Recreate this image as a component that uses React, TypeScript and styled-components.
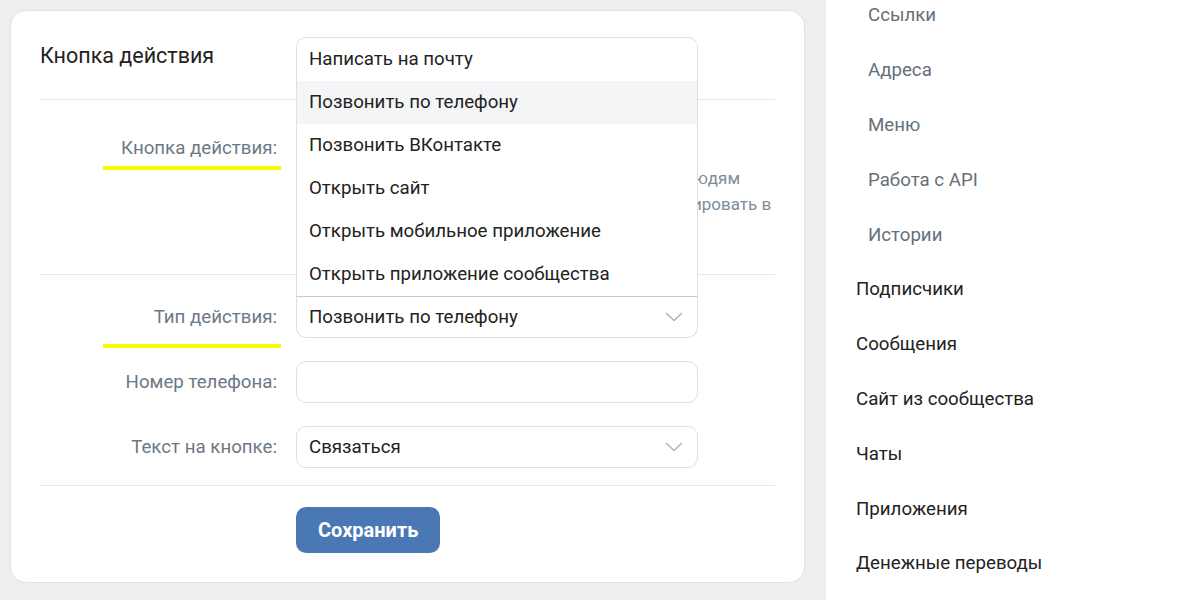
import React from 'react';
import styled, { createGlobalStyle } from 'styled-components';

const GlobalStyle = createGlobalStyle`
  html, body {
    margin: 0;
    padding: 0;
    background: #edeef0;
    font-family: Roboto, "Liberation Sans", Arial, sans-serif;
    -webkit-font-smoothing: antialiased;
  }
  * { box-sizing: border-box; }
`;

const Page = styled.div`
  display: flex;
  height: 600px;
  overflow: hidden;
  background: #edeef0;
`;

const Main = styled.main`
  padding: 10px 21px 0 10px;
`;

const Card = styled.section`
  width: 795px;
  height: 573px;
  background: #fff;
  border: 1px solid #dfe2e7;
  border-radius: 16px;
  padding: 0 29px;
`;

const CardHeader = styled.h2`
  margin: 0;
  height: 89px;
  display: flex;
  align-items: center;
  font-size: 21.5px;
  font-weight: 400;
  color: #222;
  border-bottom: 1px solid #e7e8ec;
`;

const Section = styled.div<{ top: number; bottom: number }>`
  display: flex;
  flex-direction: column;
  gap: 23px;
  padding-top: ${(p) => p.top}px;
  padding-bottom: ${(p) => p.bottom}px;
  border-bottom: 1px solid #e7e8ec;
`;

const Row = styled.div`
  display: grid;
  grid-template-columns: 237px 402px;
  column-gap: 19px;
  align-items: start;
`;

const Label = styled.label<{ mark?: number }>`
  position: relative;
  height: 42px;
  display: flex;
  align-items: center;
  justify-content: flex-end;
  font-size: 18.7px;
  color: #6d7885;

  ${(p) =>
    p.mark !== undefined &&
    `
    &::after {
      content: '';
      position: absolute;
      left: 63px;
      right: -4px;
      top: ${p.mark}px;
      height: 4px;
      background: #fbfb00;
    }
  `}
`;

const Control = styled.div`
  position: relative;
  grid-column: 2;
`;

const Field = styled.div<{ open?: boolean }>`
  height: 42px;
  display: flex;
  align-items: center;
  justify-content: space-between;
  padding: 0 14px 0 12px;
  font-size: 18.7px;
  color: #222;
  background: #fff;
  border: 1px solid #dce1e6;
  border-top-color: ${(p) => (p.open ? '#c5ccd4' : '#dce1e6')};
  border-radius: ${(p) => (p.open ? '0 0 10px 10px' : '10px')};
`;

const Chevron = () => (
  <svg width="18" height="10" viewBox="0 0 18 10">
    <polyline points="1.5,1.5 9,8.5 16.5,1.5" fill="none" stroke="#aeb7c2" strokeWidth="1.7" strokeLinecap="round" strokeLinejoin="round" />
  </svg>
);

const Menu = styled.ul`
  position: absolute;
  left: 0;
  right: 0;
  bottom: 100%;
  margin: 0;
  padding: 0;
  list-style: none;
  background: #fff;
  border: 1px solid #dce1e6;
  border-bottom: none;
  border-radius: 10px 10px 0 0;
  overflow: hidden;
  z-index: 5;
`;

const MenuItem = styled.li<{ active?: boolean }>`
  height: 43px;
  display: flex;
  align-items: center;
  padding: 0 12px;
  font-size: 18.7px;
  color: #222;
  background: ${(p) => (p.active ? '#f4f5f7' : '#fff')};
`;

const Description = styled.p`
  grid-column: 2;
  margin: -3px 0 0;
  width: 479px;
  font-size: 17px;
  line-height: 25.5px;
  color: #818c99;
  white-space: nowrap;
`;

const Footer = styled.div`
  padding: 21px 0 0 256px;
`;

const SaveButton = styled.button`
  height: 46px;
  padding: 0 22px;
  border: none;
  border-radius: 10px;
  background: #4a78b5;
  color: #fff;
  font-family: inherit;
  font-size: 20px;
  font-weight: 700;
`;

const Sidebar = styled.nav`
  flex: 1;
  background: #fff;
`;

const NavList = styled.ul`
  margin: -12px 0 0;
  padding: 0;
  list-style: none;
`;

const NavItem = styled.li<{ sub?: boolean }>`
  height: 54.8px;
  display: flex;
  align-items: center;
  padding-left: ${(p) => (p.sub ? 42 : 30)}px;
  font-size: 18.7px;
  color: ${(p) => (p.sub ? '#656f7b' : '#222')};
`;

const actions = [
  'Написать на почту',
  'Позвонить по телефону',
  'Позвонить ВКонтакте',
  'Открыть сайт',
  'Открыть мобильное приложение',
  'Открыть приложение сообщества',
];

const nav: { title: string; sub?: boolean }[] = [
  { title: 'Ссылки', sub: true },
  { title: 'Адреса', sub: true },
  { title: 'Меню', sub: true },
  { title: 'Работа с API', sub: true },
  { title: 'Истории', sub: true },
  { title: 'Подписчики' },
  { title: 'Сообщения' },
  { title: 'Сайт из сообщества' },
  { title: 'Чаты' },
  { title: 'Приложения' },
  { title: 'Денежные переводы' },
];

export default function App() {
  return (
    <>
      <GlobalStyle />
      <Page>
        <Main>
          <Card>
            <CardHeader>Кнопка действия</CardHeader>

            <Section top={27} bottom={31}>
              <Row>
                <Label mark={39}>Кнопка действия:</Label>
                <Control>
                  <Field>
                    Включена
                    <Chevron />
                  </Field>
                </Control>
                <Description>
                  Кнопка действия поможет подписчикам и всем людям
                  <br />
                  быстро связаться с вами, записаться или забронировать в
                  <br />
                  один клик.
                </Description>
              </Row>
            </Section>

            <Section top={21} bottom={17}>
              <Row>
                <Label mark={48}>Тип действия:</Label>
                <Control>
                  <Menu>
                    {actions.map((a) => (
                      <MenuItem key={a} active={a === 'Позвонить по телефону'}>
                        {a}
                      </MenuItem>
                    ))}
                  </Menu>
                  <Field open>
                    Позвонить по телефону
                    <Chevron />
                  </Field>
                </Control>
              </Row>
              <Row>
                <Label>Номер телефона:</Label>
                <Control>
                  <Field />
                </Control>
              </Row>
              <Row>
                <Label>Текст на кнопке:</Label>
                <Control>
                  <Field>
                    Связаться
                    <Chevron />
                  </Field>
                </Control>
              </Row>
            </Section>

            <Footer>
              <SaveButton>Сохранить</SaveButton>
            </Footer>
          </Card>
        </Main>

        <Sidebar>
          <NavList>
            {nav.map((n) => (
              <NavItem key={n.title} sub={n.sub}>
                {n.title}
              </NavItem>
            ))}
          </NavList>
        </Sidebar>
      </Page>
    </>
  );
}
